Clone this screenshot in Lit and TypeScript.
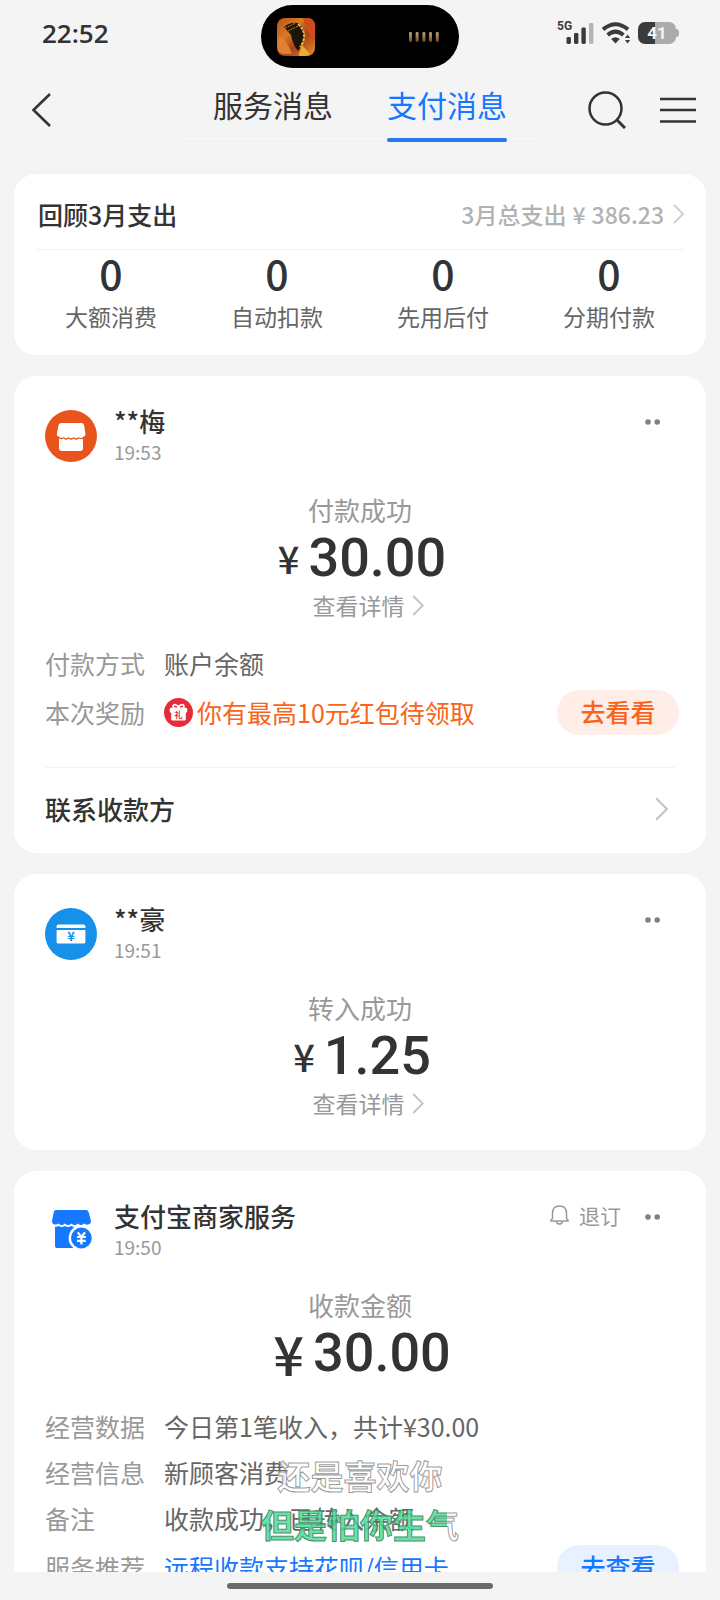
import { LitElement, html, svg, css, nothing } from "lit";
import { customElement, property } from "lit/decorators.js";

interface Row {
  label: string;
  value: string;
  tone?: "orange" | "blue";
  gift?: boolean;
  action?: string;
}

interface Message {
  icon: "shop" | "card" | "merchant";
  name: string;
  time: string;
  caption: string;
  amount: string;
  largeSign?: boolean;
  detail?: boolean;
  unsubscribe?: boolean;
  rows?: Row[];
  contact?: string;
}

const MESSAGES: Message[] = [
  {
    icon: "shop",
    name: "**梅",
    time: "19:53",
    caption: "付款成功",
    amount: "30.00",
    detail: true,
    rows: [
      { label: "付款方式", value: "账户余额" },
      { label: "本次奖励", value: "你有最高10元红包待领取", tone: "orange", gift: true, action: "去看看" },
    ],
    contact: "联系收款方",
  },
  {
    icon: "card",
    name: "**豪",
    time: "19:51",
    caption: "转入成功",
    amount: "1.25",
    detail: true,
  },
  {
    icon: "merchant",
    name: "支付宝商家服务",
    time: "19:50",
    caption: "收款金额",
    amount: "30.00",
    largeSign: true,
    unsubscribe: true,
    rows: [
      { label: "经营数据", value: "今日第1笔收入，共计¥30.00" },
      { label: "经营信息", value: "新顾客消费" },
      { label: "备注", value: "收款成功，已转入余额" },
      { label: "服务推荐", value: "远程收款支持花呗/信用卡", tone: "blue", action: "去查看" },
    ],
  },
];

const STATS = ["大额消费", "自动扣款", "先用后付", "分期付款"];

const chevron = (w: number, h: number, stroke: number) => html`
  <svg class="chevron" width=${w} height=${h} viewBox="0 0 12 22" fill="none" aria-hidden="true">
    <path d="M1 1 L11 11 L1 21" stroke="currentColor" stroke-width=${stroke} />
  </svg>
`;

const giftIcon = html`
  <svg width="29" height="29" viewBox="0 0 29 29" aria-hidden="true">
    <circle cx="14.5" cy="14.5" r="14.5" fill="#e62c3b" />
    <g fill="none" stroke="#fff" stroke-width="1.6">
      <ellipse cx="11.6" cy="8.6" rx="2.7" ry="1.7" transform="rotate(20 11.6 8.6)" />
      <ellipse cx="17.4" cy="8.6" rx="2.7" ry="1.7" transform="rotate(-20 17.4 8.6)" />
    </g>
    <rect x="5.8" y="9.8" width="17.4" height="5" rx="1.4" fill="#fff" />
    <rect x="7.2" y="13" width="14.6" height="9.6" rx="1.4" fill="#fff" />
    <text x="14.5" y="19.6" font-size="8" font-weight="700" text-anchor="middle" fill="#e62c3b">礼</text>
  </svg>
`;

const AVATARS = {
  shop: svg`
    <circle cx="26" cy="26" r="26" fill="#e9541c" />
    <path d="M16.5 13 H36.5 Q38.5 13 39 15 L40.5 24 Q40.5 26.6 38 27 Q36 29 33.5 27 Q31 29.4 28.6 27 Q26 29.4 23.6 27 Q21.2 29.4 18.8 27 Q16.4 29 14.4 27 Q11.8 26.6 11.8 24 L13.6 15 Q14.2 13 16.5 13 Z" fill="#fff" />
    <path d="M14 28.6 Q16.4 30 18.8 28.6 Q21.2 31 23.6 28.6 Q26 31 28.6 28.6 Q31 31 33.5 28.6 Q36 30 38 28.8 V38.6 Q38 41 35.6 41 H16.4 Q14 41 14 38.6 Z" fill="#fff" />
  `,
  card: svg`
    <circle cx="26" cy="26" r="26" fill="#1790ea" />
    <path d="M13.4 16.6 H38.6 Q40.4 16.6 40.4 18.2 V20 H11.6 V18.2 Q11.6 16.6 13.4 16.6 Z" fill="#fff" />
    <path d="M11.6 22 H40.4 V34 Q40.4 35.6 38.6 35.6 H13.4 Q11.6 35.6 11.6 34 Z" fill="#fff" />
    <text x="26" y="33.4" font-size="13" font-weight="700" text-anchor="middle" fill="#1790ea">¥</text>
  `,
  merchant: svg`
    <path d="M11 5 H41 Q43 5 43.6 7 L46 16 Q46 19.4 42.6 19.6 Q40.6 19.8 39 18.6 Q36 21.6 33 18.6 Q29.6 21.6 26.4 18.6 Q23 21.6 19.8 18.6 Q16.6 21.6 13.6 18.6 Q11.6 20 9.6 19.4 Q6.8 18.8 7 16 L8.8 7 Q9.2 5 11 5 Z" fill="#1677ff" />
    <path d="M10 21.6 Q12 21.8 13.6 21 Q16.8 23.2 19.8 21 Q23 23.2 26.4 21 Q29.6 23.2 33 21 Q36 23.2 41 21.6 V43 H12 Q10 43 10 41 Z" fill="#1677ff" />
    <circle cx="36.4" cy="33" r="12.8" fill="#fff" />
    <circle cx="36.4" cy="33" r="10.4" fill="#1677ff" />
    <path d="M32.8 27.4 L36.4 32 L40 27.4 M32 32 H40.8 M32 35.8 H40.8 M36.4 32 V39.4" fill="none" stroke="#fff" stroke-width="2.2" />
  `,
};

const FONT = css`"Noto Sans CJK SC", "Noto Sans", sans-serif`;

@customElement("status-bar")
class StatusBar extends LitElement {
  static styles = css`
    :host {
      display: grid;
      grid-template-columns: 1fr 198px 1fr;
      align-items: center;
      height: 73px;
      box-sizing: border-box;
      color: #333;
    }
    .time {
      padding-left: 42px;
      font: 600 26px/30px "Open Sans", sans-serif;
      margin-bottom: 8px;
    }
    .island {
      display: flex;
      align-items: center;
      justify-content: space-between;
      height: 63px;
      padding: 0 20px 0 16px;
      box-sizing: border-box;
      border-radius: 32px;
      background: #000;
    }
    .tray {
      display: flex;
      align-items: center;
      justify-content: flex-end;
      gap: 7px;
      padding-right: 41px;
      margin-bottom: 8px;
    }
    .battery {
      display: flex;
      align-items: center;
    }
    .cell {
      width: 38px;
      height: 22px;
      border-radius: 7px;
      background: linear-gradient(90deg, #3b3b3b 17px, #ababab 17px);
      color: #f4f4f4;
      font: 700 17px/22px Roboto, sans-serif;
      text-align: center;
    }
    .tip {
      width: 3px;
      height: 8px;
      border-radius: 0 3px 3px 0;
      background: #ababab;
    }
  `;

  render() {
    return html`
      <span class="time">22:52</span>
      <div class="island">
        <svg width="38" height="38" viewBox="0 0 38 38" aria-hidden="true">
          <defs>
            <linearGradient id="glow" x1="0" y1="0" x2="1" y2="1">
              <stop offset="0" stop-color="#b8521f" />
              <stop offset="0.35" stop-color="#d87a26" />
              <stop offset="0.6" stop-color="#a8401a" />
              <stop offset="1" stop-color="#e8902c" />
            </linearGradient>
          </defs>
          <rect width="38" height="38" rx="8" fill="url(#glow)" />
          <path d="M26 0 H30 Q38 0 38 8 V22 Q31 16 28 7 Z" fill="#cf4d1d" />
          <path d="M2 18 Q10 22 15 36 H8 Q1 36 1 30 Z" fill="#de822f" />
          <path d="M22 36 L25 27 L33 36 Q31 38 28 38 H22 Z" fill="#f0a835" />
          <path d="M7 9 Q13 4 21 5 Q28 10 27 19 Q26 26 21 33 Q16 27 14 17 Z" fill="#1e140a" />
          <path d="M21 6 Q28 12 27 20 Q26 26 23 29" fill="none" stroke="#e8b545" stroke-width="2" stroke-dasharray="3 1" />
          <path d="M8 10 L19 5 M11 13 L21 8" fill="none" stroke="#c9952f" stroke-width="1" stroke-dasharray="2 1" />
        </svg>
        <svg width="30" height="10" viewBox="0 0 30 10" aria-hidden="true">
          <defs>
            <linearGradient id="wave" x1="0" y1="0" x2="0" y2="1">
              <stop offset="0" stop-color="#b9a67c" />
              <stop offset="1" stop-color="#7c4420" />
            </linearGradient>
          </defs>
          ${[0, 6.6, 13.4, 20, 26.8].map(
            (x) => svg`<rect x=${x} y="0" width="3" height="10" rx="1.4" fill="url(#wave)" />`
          )}
        </svg>
      </div>
      <div class="tray">
        <svg width="37" height="26" viewBox="0 0 37 26" role="img" aria-label="5G">
          <text x="0" y="10" font-family="Roboto" font-size="12" font-weight="700" fill="#3b3b3b">5G</text>
          <rect x="9.5" y="17" width="4.4" height="7" rx="1.4" fill="#3b3b3b" />
          <rect x="17" y="13" width="4.4" height="11" rx="1.4" fill="#3b3b3b" />
          <rect x="24.4" y="7.6" width="4.4" height="16.4" rx="1.4" fill="#3b3b3b" />
          <rect x="32" y="3" width="4.4" height="21" rx="1.4" fill="#b4b4b4" />
        </svg>
        <svg width="30" height="22" viewBox="0 0 30 22" aria-hidden="true">
          <path d="M2 7.4 Q14.5 -2.8 27 7.4" fill="none" stroke="#3b3b3b" stroke-width="4" />
          <path d="M6.6 13 Q14.5 6.2 22.4 13" fill="none" stroke="#3b3b3b" stroke-width="4" />
          <path d="M10.2 17 Q14.5 13.4 18.8 17 L14.5 21.4 Z" fill="#3b3b3b" />
          <path d="M24 16 L26.6 12.4 L29.2 16 Z M24 18 L26.6 21.6 L29.2 18 Z" fill="#3b3b3b" />
        </svg>
        <div class="battery"><span class="cell">41</span><span class="tip"></span></div>
      </div>
    `;
  }
}

@customElement("nav-bar")
class NavBar extends LitElement {
  static styles = css`
    :host {
      display: grid;
      grid-template-columns: 1fr auto 1fr;
      font-family: ${FONT};
    }
    button {
      padding: 0;
      border: 0;
      background: none;
      font: inherit;
      color: #333;
      cursor: pointer;
    }
    svg {
      display: block;
    }
    .side {
      display: flex;
      align-items: center;
      padding: 4px 24px 0 31px;
    }
    .end {
      justify-content: flex-end;
      gap: 34px;
    }
    .tabs {
      display: flex;
      gap: 54px;
      padding: 0 29px;
      box-shadow: inset 0 -1px #efefef;
    }
    .tab {
      padding-top: 9px;
      width: 120px;
      font-size: 30px;
      line-height: 44px;
      white-space: nowrap;
    }
    .tab::after {
      content: "";
      display: block;
      height: 4px;
      margin-top: 12px;
      border-radius: 2px;
    }
    .tab[aria-selected="true"] {
      color: #1677ff;
    }
    .tab[aria-selected="true"]::after {
      background: #2878ec;
    }
  `;

  render() {
    return html`
      <div class="side">
        <button aria-label="返回">
          <svg width="22" height="36" viewBox="0 0 22 36" fill="none">
            <path d="M19 2 L2.5 18 L19 34" stroke="#333" stroke-width="2.6" />
          </svg>
        </button>
      </div>
      <div class="tabs" role="tablist">
        <button class="tab" role="tab" aria-selected="false">服务消息</button>
        <button class="tab" role="tab" aria-selected="true">支付消息</button>
      </div>
      <div class="side end">
        <button aria-label="搜索">
          <svg width="38" height="38" viewBox="0 0 38 38" fill="none" stroke="#333" stroke-width="2.5">
            <circle cx="17.5" cy="17.5" r="16" />
            <path d="M28.5 28.5 L37 37" stroke-width="3" />
          </svg>
        </button>
        <button aria-label="菜单">
          <svg width="36" height="26" viewBox="0 0 36 26" fill="none" stroke="#333" stroke-width="2.6">
            <path d="M0 2 H36 M0 13 H36 M0 24.5 H36" />
          </svg>
        </button>
      </div>
    `;
  }
}

@customElement("spend-summary")
class SpendSummary extends LitElement {
  static styles = css`
    :host {
      display: block;
      padding: 0 14px 23px;
      border-radius: 22px;
      background: #fff;
      font-family: ${FONT};
    }
    .head {
      display: flex;
      align-items: center;
      justify-content: space-between;
      height: 76px;
      box-sizing: border-box;
      margin: 0 8px 0 9px;
      padding: 5px 0 0 1px;
      border-bottom: 1px solid #f2f2f2;
    }
    h2 {
      margin: 0;
      font-size: 25px;
      line-height: 36px;
      font-weight: 500;
      color: #333;
    }
    .total {
      display: flex;
      align-items: center;
      gap: 9px;
      color: #b2b2b2;
      font-size: 23px;
      line-height: 36px;
      font-weight: 500;
      text-decoration: none;
    }
    .sum {
      display: flex;
      gap: 6px;
    }
    .chevron {
      color: #ccc;
    }
    .stats {
      display: grid;
      grid-template-columns: repeat(4, 1fr);
      margin: 0;
    }
    .stat {
      display: flex;
      flex-direction: column-reverse;
      align-items: center;
      gap: 5px;
    }
    dt {
      font-size: 23px;
      line-height: 32px;
      color: #666;
    }
    dd {
      margin: 0;
      font-size: 41px;
      line-height: 45px;
      font-weight: 500;
      color: #333;
    }
  `;

  render() {
    return html`
      <div class="head">
        <h2>回顾3月支出</h2>
        <a class="total" href="#bill">
          <span class="sum"><span>3月总支出</span><span>¥</span><span>386.23</span></span>
          ${chevron(11, 20, 2)}
        </a>
      </div>
      <dl class="stats">
        ${STATS.map((s) => html`<div class="stat"><dt>${s}</dt><dd>0</dd></div>`)}
      </dl>
    `;
  }
}

@customElement("message-card")
class MessageCard extends LitElement {
  @property({ attribute: false }) message!: Message;

  static styles = css`
    :host {
      display: block;
      border-radius: 22px;
      background: #fff;
      font-family: ${FONT};
    }
    button {
      border: 0;
      background: none;
      padding: 0;
      font: inherit;
      color: inherit;
      cursor: pointer;
    }
    a {
      color: inherit;
      text-decoration: none;
    }
    svg {
      display: block;
      flex: none;
    }
    .head {
      display: flex;
      align-items: flex-start;
      padding: 28px 31px 0;
    }
    .avatar {
      margin: 6px 17px 0 0;
    }
    .who {
      flex: 1;
    }
    h2 {
      margin: 0;
      font-size: 26px;
      line-height: 34px;
      font-weight: 500;
      color: #333;
    }
    time {
      display: block;
      font-size: 19px;
      line-height: 28px;
      color: #999;
    }
    .tools {
      display: flex;
      align-items: center;
      height: 36px;
      color: #999;
    }
    .unsub {
      display: flex;
      align-items: center;
      gap: 10px;
      padding-bottom: 5px;
      font-size: 21px;
      line-height: 32px;
    }
    .more {
      padding: 0 15px 0 24px;
    }
    .hero {
      display: flex;
      flex-direction: column;
      align-items: center;
      padding-top: 26px;
    }
    .caption {
      margin: 0;
      font-size: 26px;
      line-height: 36px;
      color: #999;
    }
    .amount {
      display: flex;
      align-items: center;
      gap: 9px;
      margin: 0;
      padding-left: 4px;
      color: #333;
      font-family: Roboto, sans-serif;
      font-size: 54px;
      line-height: 60px;
      font-weight: 500;
    }
    .sign {
      font-family: ${FONT};
      font-size: 38px;
    }
    .sign.large {
      font-size: 54px;
    }
    .detail {
      display: flex;
      align-items: center;
      gap: 7px;
      margin: 1px 0 7px;
      padding-left: 16px;
      font-size: 23px;
      line-height: 32px;
      color: #999;
    }
    .chevron {
      color: #c4c4c4;
    }
    .rows {
      display: flex;
      flex-direction: column;
      gap: 11px;
      margin: 0;
      padding: 18px 27px 0 31px;
      font-size: 25px;
      line-height: 35px;
    }
    .rows.plain {
      padding-top: 26px;
    }
    .row {
      display: flex;
      align-items: center;
    }
    dt {
      width: 119px;
      color: #999;
    }
    dd {
      flex: 1;
      display: flex;
      align-items: center;
      gap: 4px;
      margin: 0;
      color: #666;
      white-space: nowrap;
    }
    .orange {
      color: #fa6418;
    }
    .blue {
      color: #1677ff;
    }
    .pill {
      width: 122px;
      height: 45px;
      margin: -2px 0 -2px auto;
      padding-bottom: 2px;
      border-radius: 23px;
      font-weight: 500;
    }
    .pill.orange {
      background: #ffede7;
    }
    .pill.blue {
      background: #e8f1ff;
    }
    .contact {
      display: flex;
      align-items: center;
      justify-content: space-between;
      height: 86px;
      box-sizing: border-box;
      margin: 34px 31px 0;
      padding: 0 7px 3px 0;
      border-top: 1px solid #f2f2f2;
      font-size: 26px;
      line-height: 36px;
      font-weight: 500;
      color: #333;
    }
    .foot {
      height: 24px;
    }
  `;

  render() {
    const m = this.message;
    return html`
      <header class="head">
        <svg class="avatar" width="52" height="52" viewBox="0 0 52 52" font-weight="700" aria-hidden="true">
          ${AVATARS[m.icon]}
        </svg>
        <div class="who">
          <h2>${m.name}</h2>
          <time>${m.time}</time>
        </div>
        <div class="tools">
          ${m.unsubscribe
            ? html`<button class="unsub">
                <svg width="19" height="20" viewBox="0 0 19 20" fill="none" stroke="#999" stroke-width="1.5" aria-hidden="true">
                  <path d="M1 16 H18 V15 L16.5 13.5 V8.2 Q16.5 1 9.5 1 Q2.5 1 2.5 8.2 V13.5 L1 15 Z" />
                  <path d="M6.5 16.5 Q7 19 9.5 19 Q12 19 12.5 16.5" />
                </svg>
                退订
              </button>`
            : nothing}
          <button class="more" aria-label="更多">
            <svg width="15" height="6" viewBox="0 0 15 6" fill="#808080">
              <circle cx="3" cy="3" r="2.8" />
              <circle cx="12.2" cy="3" r="2.8" />
            </svg>
          </button>
        </div>
      </header>
      <div class="hero">
        <p class="caption">${m.caption}</p>
        <p class="amount"><span class="sign ${m.largeSign ? "large" : ""}">¥</span>${m.amount}</p>
        ${m.detail
          ? html`<a class="detail" href="#detail">查看详情${chevron(12, 21, 2)}</a>`
          : nothing}
      </div>
      ${m.rows
        ? html`<dl class="rows ${m.detail ? "" : "plain"}">
            ${m.rows.map(
              (r) => html`<div class="row">
                <dt>${r.label}</dt>
                <dd>
                  ${r.gift ? giftIcon : nothing}<span class=${r.tone ?? ""}>${r.value}</span>
                  ${r.action ? html`<button class="pill ${r.tone ?? ""}">${r.action}</button>` : nothing}
                </dd>
              </div>`
            )}
          </dl>`
        : nothing}
      ${m.contact
        ? html`<a class="contact" href="#contact">${m.contact}${chevron(13, 24, 2)}</a>`
        : html`<div class="foot"></div>`}
    `;
  }
}

@customElement("app-root")
class AppRoot extends LitElement {
  static styles = css`
    :host {
      position: relative;
      display: flex;
      flex-direction: column;
      height: 100vh;
      background: #f4f4f4;
      font-family: ${FONT};
    }
    .list {
      flex: 1;
      min-height: 0;
      display: flex;
      flex-direction: column;
      gap: 21px;
      margin-top: 32px;
      padding: 0 14px;
      overflow: hidden;
    }
    .list > * {
      flex: none;
    }
    .home {
      flex: none;
      display: flex;
      justify-content: center;
      padding: 11px 0;
    }
    .handle {
      width: 266px;
      height: 6px;
      border-radius: 3px;
      background: #6a6a6a;
    }
    .lyrics {
      position: absolute;
      left: 0;
      right: 0;
      bottom: 51px;
      display: flex;
      flex-direction: column;
      align-items: center;
      pointer-events: none;
      font-size: 33px;
      line-height: 49px;
      font-weight: 700;
      -webkit-text-stroke: 1px rgba(70, 70, 70, 0.55);
    }
    .line {
      margin: 0;
      color: transparent;
      background: rgba(255, 255, 255, 0.8);
      -webkit-background-clip: text;
      background-clip: text;
    }
    .sung {
      background: linear-gradient(90deg, rgba(76, 222, 150, 0.85) 94%, rgba(255, 255, 255, 0.8) 94%);
      -webkit-background-clip: text;
      background-clip: text;
    }
  `;

  render() {
    return html`
      <status-bar></status-bar>
      <nav-bar></nav-bar>
      <main class="list">
        <spend-summary></spend-summary>
        ${MESSAGES.map((m) => html`<message-card .message=${m}></message-card>`)}
      </main>
      <div class="home"><div class="handle"></div></div>
      <div class="lyrics">
        <p class="line">还是喜欢你</p>
        <p class="line sung">但是怕你生气</p>
      </div>
    `;
  }
}
